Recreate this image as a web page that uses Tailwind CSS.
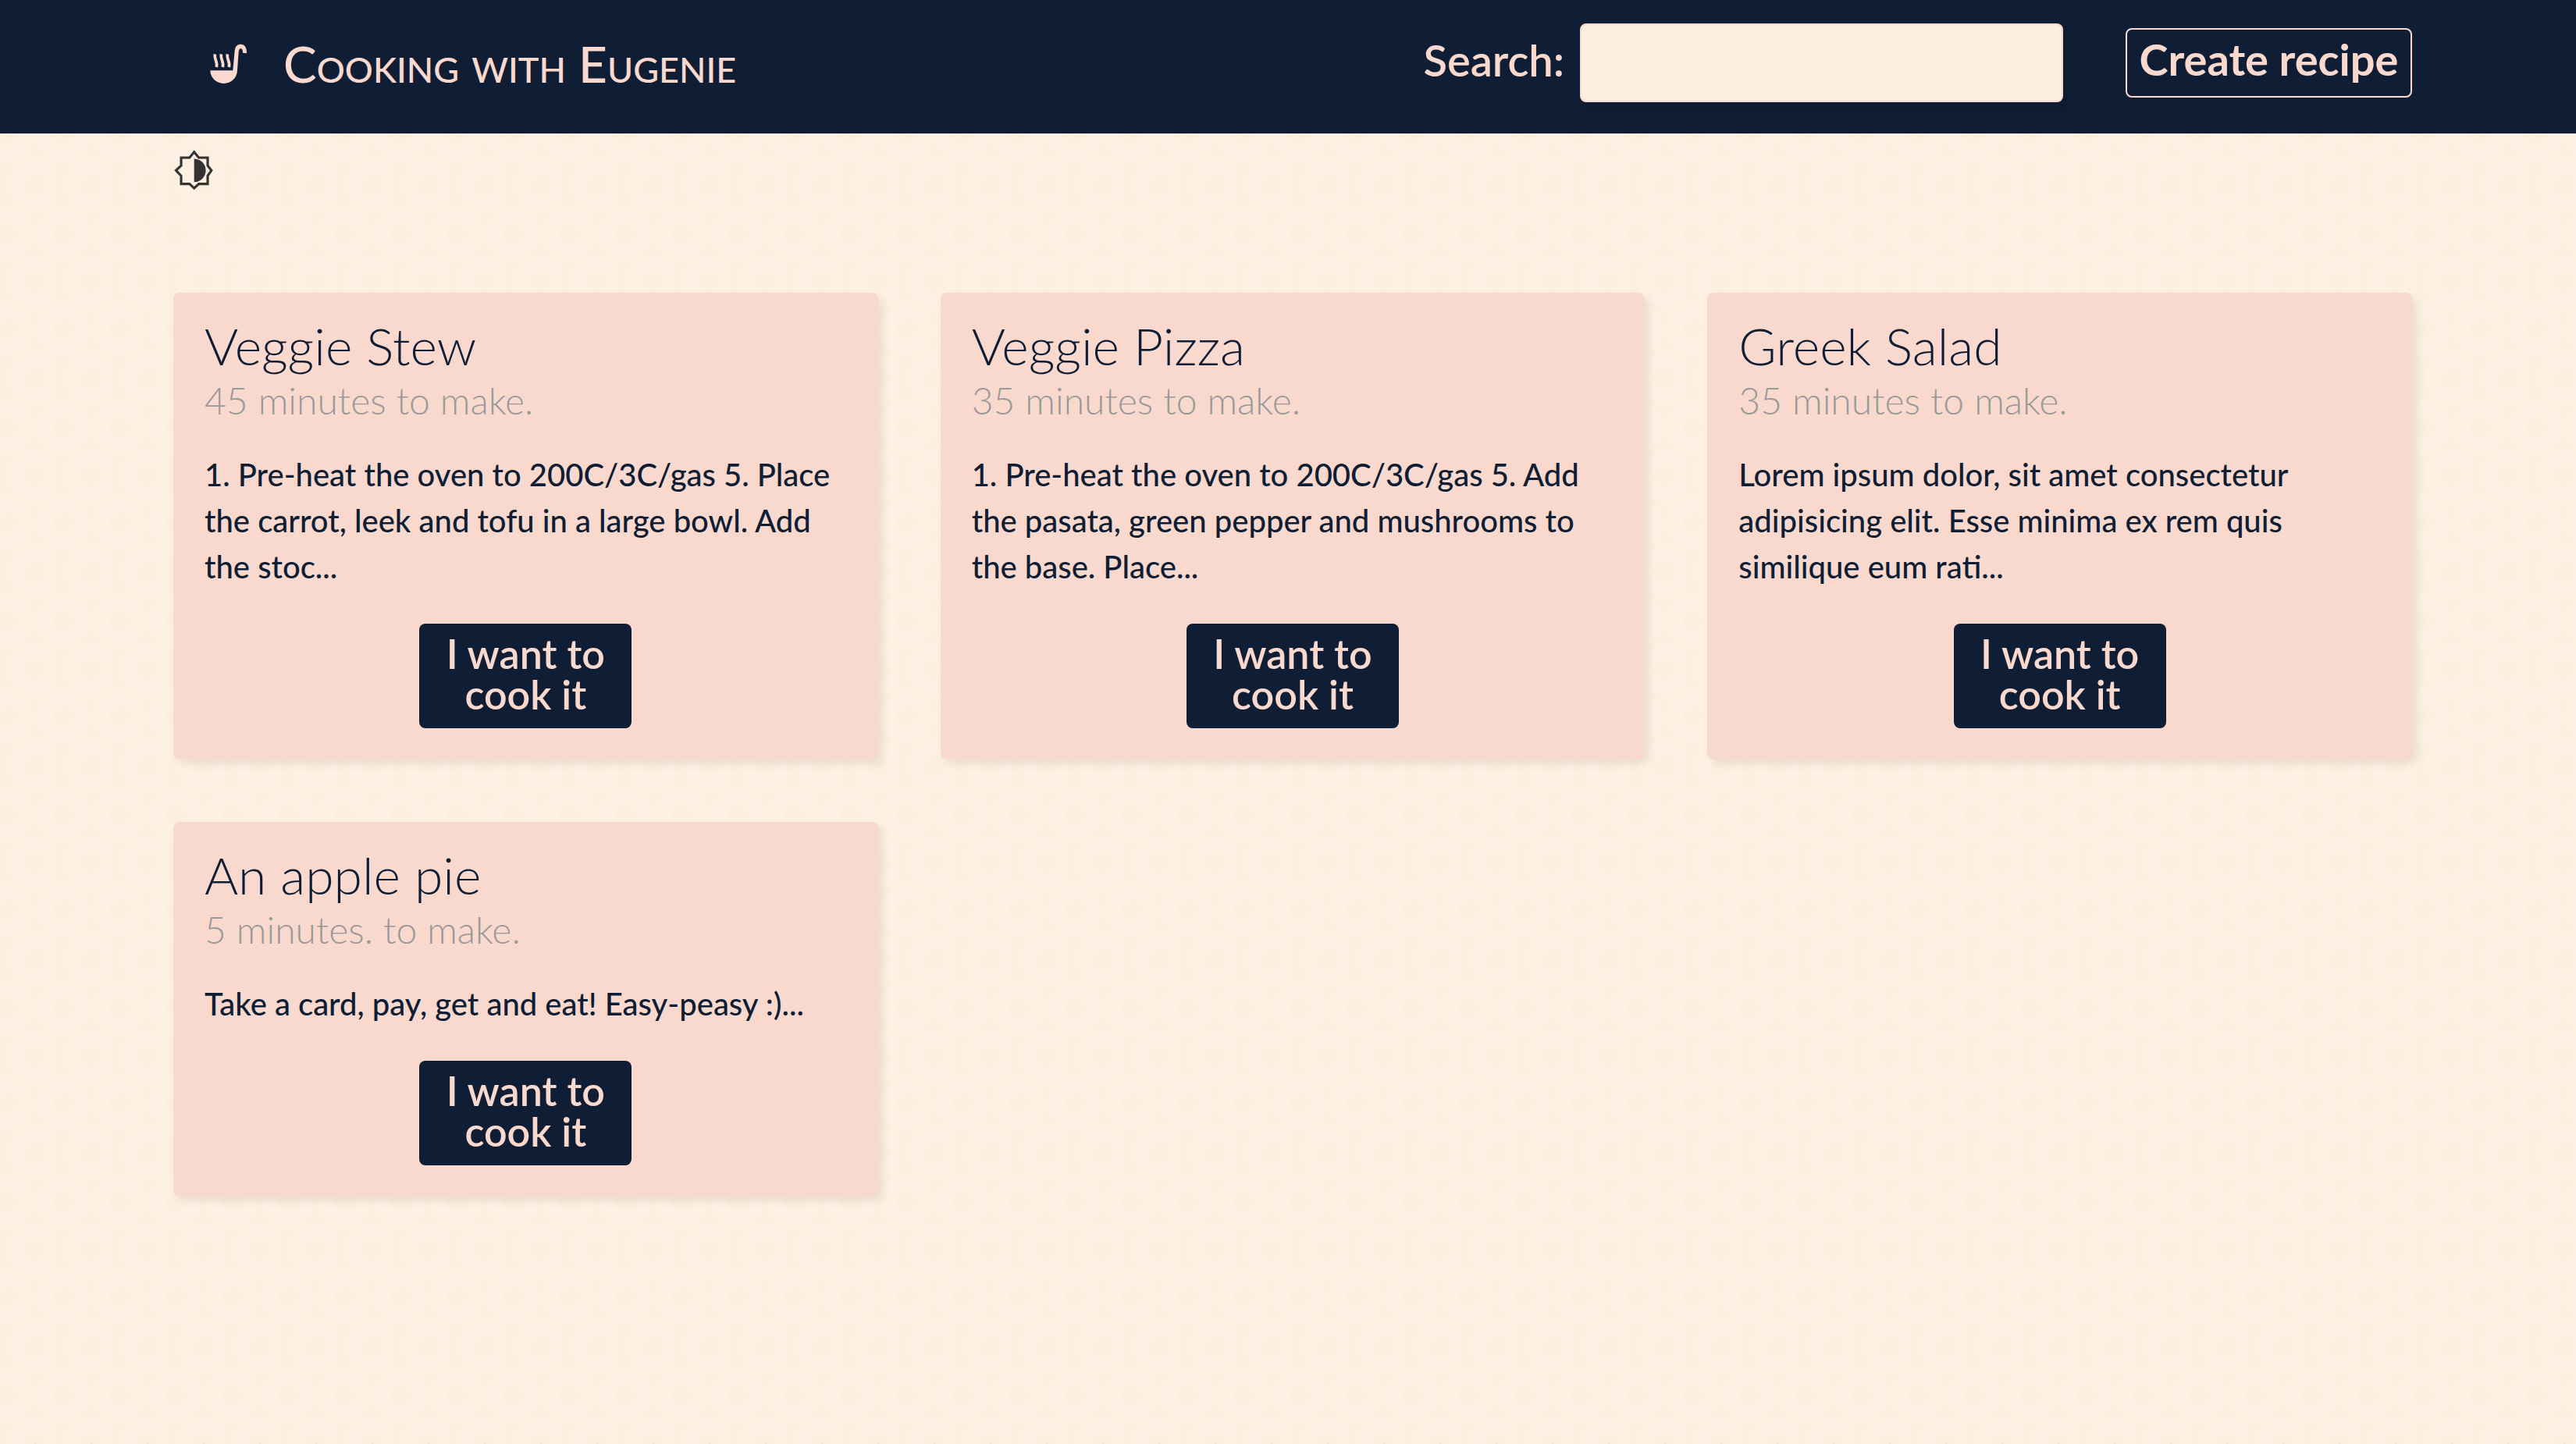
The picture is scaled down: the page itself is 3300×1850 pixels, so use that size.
<!DOCTYPE html>
<html lang="en">
<head>
<meta charset="utf-8">
<title>Cooking with Eugenie</title>
<script src="https://cdn.jsdelivr.net/npm/@tailwindcss/browser@4"></script>
</head>
<body class="relative isolate min-h-screen bg-[#fcefde] font-['Lato',sans-serif] text-[#0f1e35]">
<svg class="absolute inset-0 -z-10 h-full w-full" aria-hidden="true">
  <defs>
    <pattern id="rings" width="72" height="124" patternUnits="userSpaceOnUse">
      <g fill="none" stroke="#fef1e3" stroke-width="21">
        <circle cx="9" cy="51" r="24"/>
        <circle cx="81" cy="51" r="24"/>
        <circle cx="45" cy="113" r="24"/>
        <circle cx="45" cy="-11" r="24"/>
      </g>
      <g fill="#efe5d3">
        <circle cx="9" cy="51" r="1"/>
        <circle cx="45" cy="113" r="1"/>
        <circle cx="45" cy="72" r="1"/>
      </g>
    </pattern>
  </defs>
  <rect width="100%" height="100%" fill="url(#rings)"/>
</svg>

<header class="flex h-[171px] items-start justify-between bg-[#0f1e35] pr-[210px] pl-[269px] text-[#f9d9ce]">
  <a href="#" class="flex items-center gap-[46px] pt-8">
    <svg class="h-[52px] w-12" viewBox="42 45 144 156" fill="currentColor" aria-hidden="true">
      <path d="M43 148H130L137 72C139 54 148 47 160 47C174 47 184 58 183 82L168 80C168 70 166 64 160 64C155 64 153 70 152 78L147 148C146 178 122 198 95 198C66 198 43 175 43 148Z"/>
      <path d="M61 85C57 105 73 115 67 135M85 85C81 105 97 115 91 135M109 85C105 105 121 115 115 135" fill="none" stroke="currentColor" stroke-width="11"/>
    </svg>
    <span class="text-[64px] leading-[100px] font-medium whitespace-nowrap [font-variant:small-caps]">Cooking with Eugenie</span>
  </a>
  <div class="flex items-start gap-20 pt-[30px]">
    <div class="flex items-start gap-5">
      <label for="search" class="pt-[13px] text-[56px] leading-[68px] font-semibold">Search:</label>
      <input id="search" type="text" class="h-[101px] w-[619px] rounded-lg border-2 border-[#f9d9ce] bg-[#fcefde] px-5 text-[48px] text-[#0f1e35] shadow-[4px_8px_12px_rgba(0,0,0,0.1)]">
    </div>
    <button type="button" class="mt-[6px] h-[89px] w-[367px] rounded-lg border-2 border-[#f9d9ce] pb-[10px] text-[56px] leading-[68px] font-bold whitespace-nowrap">Create recipe</button>
  </div>
</header>

<main class="pt-[21px] pr-[210px] pl-[222px]">
  <button type="button" aria-label="Toggle theme" class="block text-[#333]">
    <svg class="h-[52px] w-[52px]" viewBox="39 36 150 150" aria-hidden="true">
      <path d="M116 44L133 65H166V94L180 112L166 132V162H133L116 178L99 162H68V132L49 112L68 94V65H99Z" fill="none" stroke="currentColor" stroke-width="9"/>
      <path d="M116 69A43 43 0 0 1 116 155Z" fill="currentColor"/>
    </svg>
  </button>

  <div class="mt-[131px] grid grid-cols-3 items-start gap-20">
    <article class="rounded-lg bg-[#f9d9ce] p-10 shadow-[6px_6px_12px_rgba(0,0,0,0.08)]">
      <h2 class="text-[66px] leading-[56px] font-light">Veggie Stew</h2>
      <p class="mt-[10px] text-[48px] leading-[64px] font-light text-[#999]">45 minutes to make.</p>
      <p class="mt-[34px] text-[40px] leading-[59px] font-medium">1. Pre-heat the oven to 200C/3C/gas 5. Place the carrot, leek and tofu in a large bowl. Add the stoc...</p>
      <a href="#" class="mx-auto mt-[43px] block h-[134px] w-[272px] rounded-lg bg-[#0f1e35] px-6 pt-3 text-center text-[52px] leading-[52px] font-semibold text-[#f9d9ce]">I want to cook it</a>
    </article>
    <article class="rounded-lg bg-[#f9d9ce] p-10 shadow-[6px_6px_12px_rgba(0,0,0,0.08)]">
      <h2 class="text-[66px] leading-[56px] font-light">Veggie Pizza</h2>
      <p class="mt-[10px] text-[48px] leading-[64px] font-light text-[#999]">35 minutes to make.</p>
      <p class="mt-[34px] text-[40px] leading-[59px] font-medium">1. Pre-heat the oven to 200C/3C/gas 5. Add the pasata, green pepper and mushrooms to the base. Place...</p>
      <a href="#" class="mx-auto mt-[43px] block h-[134px] w-[272px] rounded-lg bg-[#0f1e35] px-6 pt-3 text-center text-[52px] leading-[52px] font-semibold text-[#f9d9ce]">I want to cook it</a>
    </article>
    <article class="rounded-lg bg-[#f9d9ce] p-10 shadow-[6px_6px_12px_rgba(0,0,0,0.08)]">
      <h2 class="text-[66px] leading-[56px] font-light">Greek Salad</h2>
      <p class="mt-[10px] text-[48px] leading-[64px] font-light text-[#999]">35 minutes to make.</p>
      <p class="mt-[34px] text-[40px] leading-[59px] font-medium">Lorem ipsum dolor, sit amet consectetur adipisicing elit. Esse minima ex rem quis similique eum rati...</p>
      <a href="#" class="mx-auto mt-[43px] block h-[134px] w-[272px] rounded-lg bg-[#0f1e35] px-6 pt-3 text-center text-[52px] leading-[52px] font-semibold text-[#f9d9ce]">I want to cook it</a>
    </article>
    <article class="rounded-lg bg-[#f9d9ce] p-10 shadow-[6px_6px_12px_rgba(0,0,0,0.08)]">
      <h2 class="text-[66px] leading-[56px] font-light">An apple pie</h2>
      <p class="mt-[10px] text-[48px] leading-[64px] font-light text-[#999]">5 minutes. to make.</p>
      <p class="mt-[34px] text-[40px] leading-[59px] font-medium">Take a card, pay, get and eat! Easy-peasy :)...</p>
      <a href="#" class="mx-auto mt-[43px] block h-[134px] w-[272px] rounded-lg bg-[#0f1e35] px-6 pt-3 text-center text-[52px] leading-[52px] font-semibold text-[#f9d9ce]">I want to cook it</a>
    </article>
  </div>
</main>
</body>
</html>
